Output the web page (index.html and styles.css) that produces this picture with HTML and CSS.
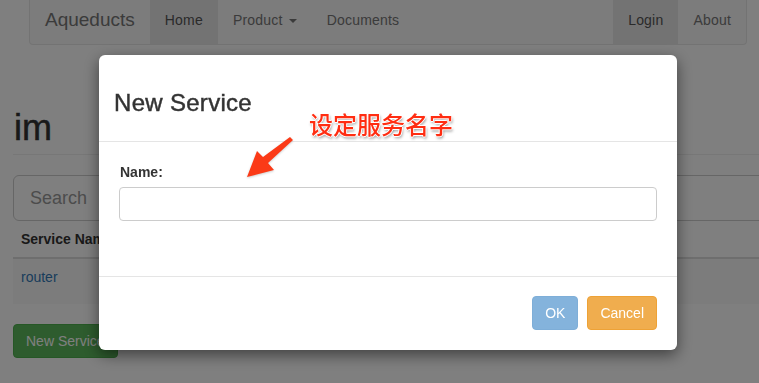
FILE: index.html
```html
<!DOCTYPE html>
<html lang="zh">
<head>
    <meta charset="UTF-8">
    <title>Aqueducts - im</title>
    <link rel="stylesheet" href="styles.css">
</head>
<body>
    <nav class="navbar">
        <a class="brand" href="#">Aqueducts</a>
        <ul class="nav">
            <li class="active"><a href="#">Home</a></li>
            <li><a href="#">Product <span class="caret"></span></a></li>
            <li><a href="#">Documents</a></li>
        </ul>
        <ul class="nav nav-right">
            <li class="active"><a href="#">Login</a></li>
            <li><a href="#">About</a></li>
        </ul>
    </nav>

    <div class="page">
        <div class="page-header">
            <h1>im</h1>
        </div>
        <input class="search" type="text" placeholder="Search">
        <table class="table">
            <thead>
                <tr><th>Service Name</th></tr>
            </thead>
            <tbody>
                <tr><td><a href="#">router</a></td></tr>
            </tbody>
        </table>
        <button class="btn btn-success">New Service</button>
    </div>

    <div class="backdrop"></div>

    <div class="modal">
        <div class="modal-dialog">
            <div class="modal-header">
                <h3>New Service</h3>
            </div>
            <div class="modal-body">
                <div class="form-group">
                    <label for="name">Name:</label>
                    <input id="name" type="text">
                </div>
            </div>
            <div class="modal-footer">
                <button class="btn btn-ok">OK</button>
                <button class="btn btn-warning">Cancel</button>
            </div>

            <!-- anotación -->
            <div class="note">设定服务名字</div>
            <svg class="note-arrow" width="60" height="55" viewBox="0 0 60 55">
                <polygon points="7,47 17,21 23,27 50,7 53,10 28,33 34,40" fill="#fb3a17"/>
            </svg>
        </div>
    </div>
</body>
</html>
```

FILE: styles.css
```css
* {
    margin: 0;
    padding: 0;
    box-sizing: border-box;
}

body {
    font-family: "Liberation Sans", Arial, sans-serif;
    font-size: 14px;
    line-height: 20px;
    color: #333;
    background: #fff;
    overflow: hidden;
}

a {
    color: #337ab7;
    text-decoration: none;
}

/* navbar */
.navbar {
    display: flex;
    margin: 0 12px 0 29px;
    height: 45px;
    background: #f8f8f8;
    border: 1px solid #e7e7e7;
    border-top: 0;
    border-radius: 0 0 4px 4px;
}

.brand {
    padding: 10px 15px 14px;
    font-size: 19px;
    color: #777;
}

.nav {
    display: flex;
    list-style: none;
}

.nav a {
    display: block;
    padding: 10px 15px 14px;
    color: #777;
    letter-spacing: 0.2px;
}

.nav .active a {
    background: #e7e7e7;
    color: #555;
}

.nav-right {
    margin-left: auto;
}

.caret {
    display: inline-block;
    width: 0;
    height: 0;
    margin-left: 2px;
    vertical-align: middle;
    border-top: 4px solid;
    border-left: 4px solid transparent;
    border-right: 4px solid transparent;
}

/* page */
.page {
    width: 800px;
    padding-left: 13px;
}

.page-header {
    margin-top: 63px;
    padding-bottom: 6px;
    border-bottom: 1px solid #eee;
}

h1 {
    font-size: 36px;
    line-height: 40px;
    font-weight: 500;
    padding-left: 1px;
    -webkit-text-stroke: 0.5px #333;
}

.search {
    display: block;
    width: 100%;
    height: 46px;
    margin-top: 20px;
    padding: 10px 16px;
    font-family: inherit;
    font-size: 18px;
    border: 1px solid #ccc;
    border-radius: 6px;
}

.search::placeholder {
    color: #999;
}

.table {
    width: 100%;
    border-collapse: collapse;
    margin-bottom: 20px;
}

.table th {
    text-align: left;
    padding: 8px;
    border-bottom: 2px solid #ddd;
}

.table td {
    height: 46px;
    padding: 8px;
    vertical-align: top;
    background: #f9f9f9;
    border-top: 1px solid #ddd;
}

.btn {
    display: inline-block;
    padding: 6px 12px;
    font-family: inherit;
    font-size: 14px;
    line-height: 20px;
    border: 1px solid transparent;
    border-radius: 4px;
    color: #fff;
    cursor: pointer;
}

.btn-success {
    background: #5cb85c;
    border-color: #4cae4c;
}

/* modal */
.backdrop {
    position: fixed;
    inset: 0;
    background: rgba(0, 0, 0, 0.5);
}

.modal {
    position: fixed;
    inset: 0;
}

.modal-dialog {
    position: relative;
    width: 578px;
    margin: 55px 0 0 99px;
    background: #fff;
    border-radius: 6px;
    box-shadow: 0 5px 15px rgba(0, 0, 0, 0.5);
}

.modal-header {
    padding: 15px;
    border-bottom: 1px solid #e5e5e5;
}

.modal-header h3 {
    margin: 20px 0 10px;
    font-size: 24px;
    line-height: 26px;
    font-weight: 500;
    letter-spacing: 0.3px;
    -webkit-text-stroke: 0.45px #333;
}

.modal-body {
    padding: 20px;
}

.form-group {
    margin-bottom: 35px;
}

label {
    display: block;
    margin-bottom: 5px;
    font-weight: bold;
    padding-left: 1px;
}

.form-group input {
    display: block;
    width: 100%;
    height: 34px;
    padding: 6px 12px;
    border: 1px solid #ccc;
    border-radius: 4px;
}

.modal-footer {
    display: flex;
    justify-content: flex-end;
    gap: 9px;
    padding: 19px 20px 20px;
    border-top: 1px solid #e5e5e5;
}

.btn-ok {
    background: #84b3dc;
    border-color: #7eaed8;
}

.btn-warning {
    background: #f0ad4e;
    border-color: #eea236;
}

.note {
    position: absolute;
    left: 210px;
    top: 57px;
    font-family: "Noto Sans CJK SC", sans-serif;
    font-size: 24px;
    line-height: 24px;
    font-weight: 500;
    color: #ff2d12;
    text-shadow: 1px 0 0 #fff, -1px 0 0 #fff, 0 1px 0 #fff, 0 -1px 0 #fff, 1px 2px 3px rgba(0, 0, 0, 0.45);
}

.note-arrow {
    position: absolute;
    left: 141px;
    top: 75px;
    filter: drop-shadow(0 1px 1px rgba(0, 0, 0, 0.2));
}
```
